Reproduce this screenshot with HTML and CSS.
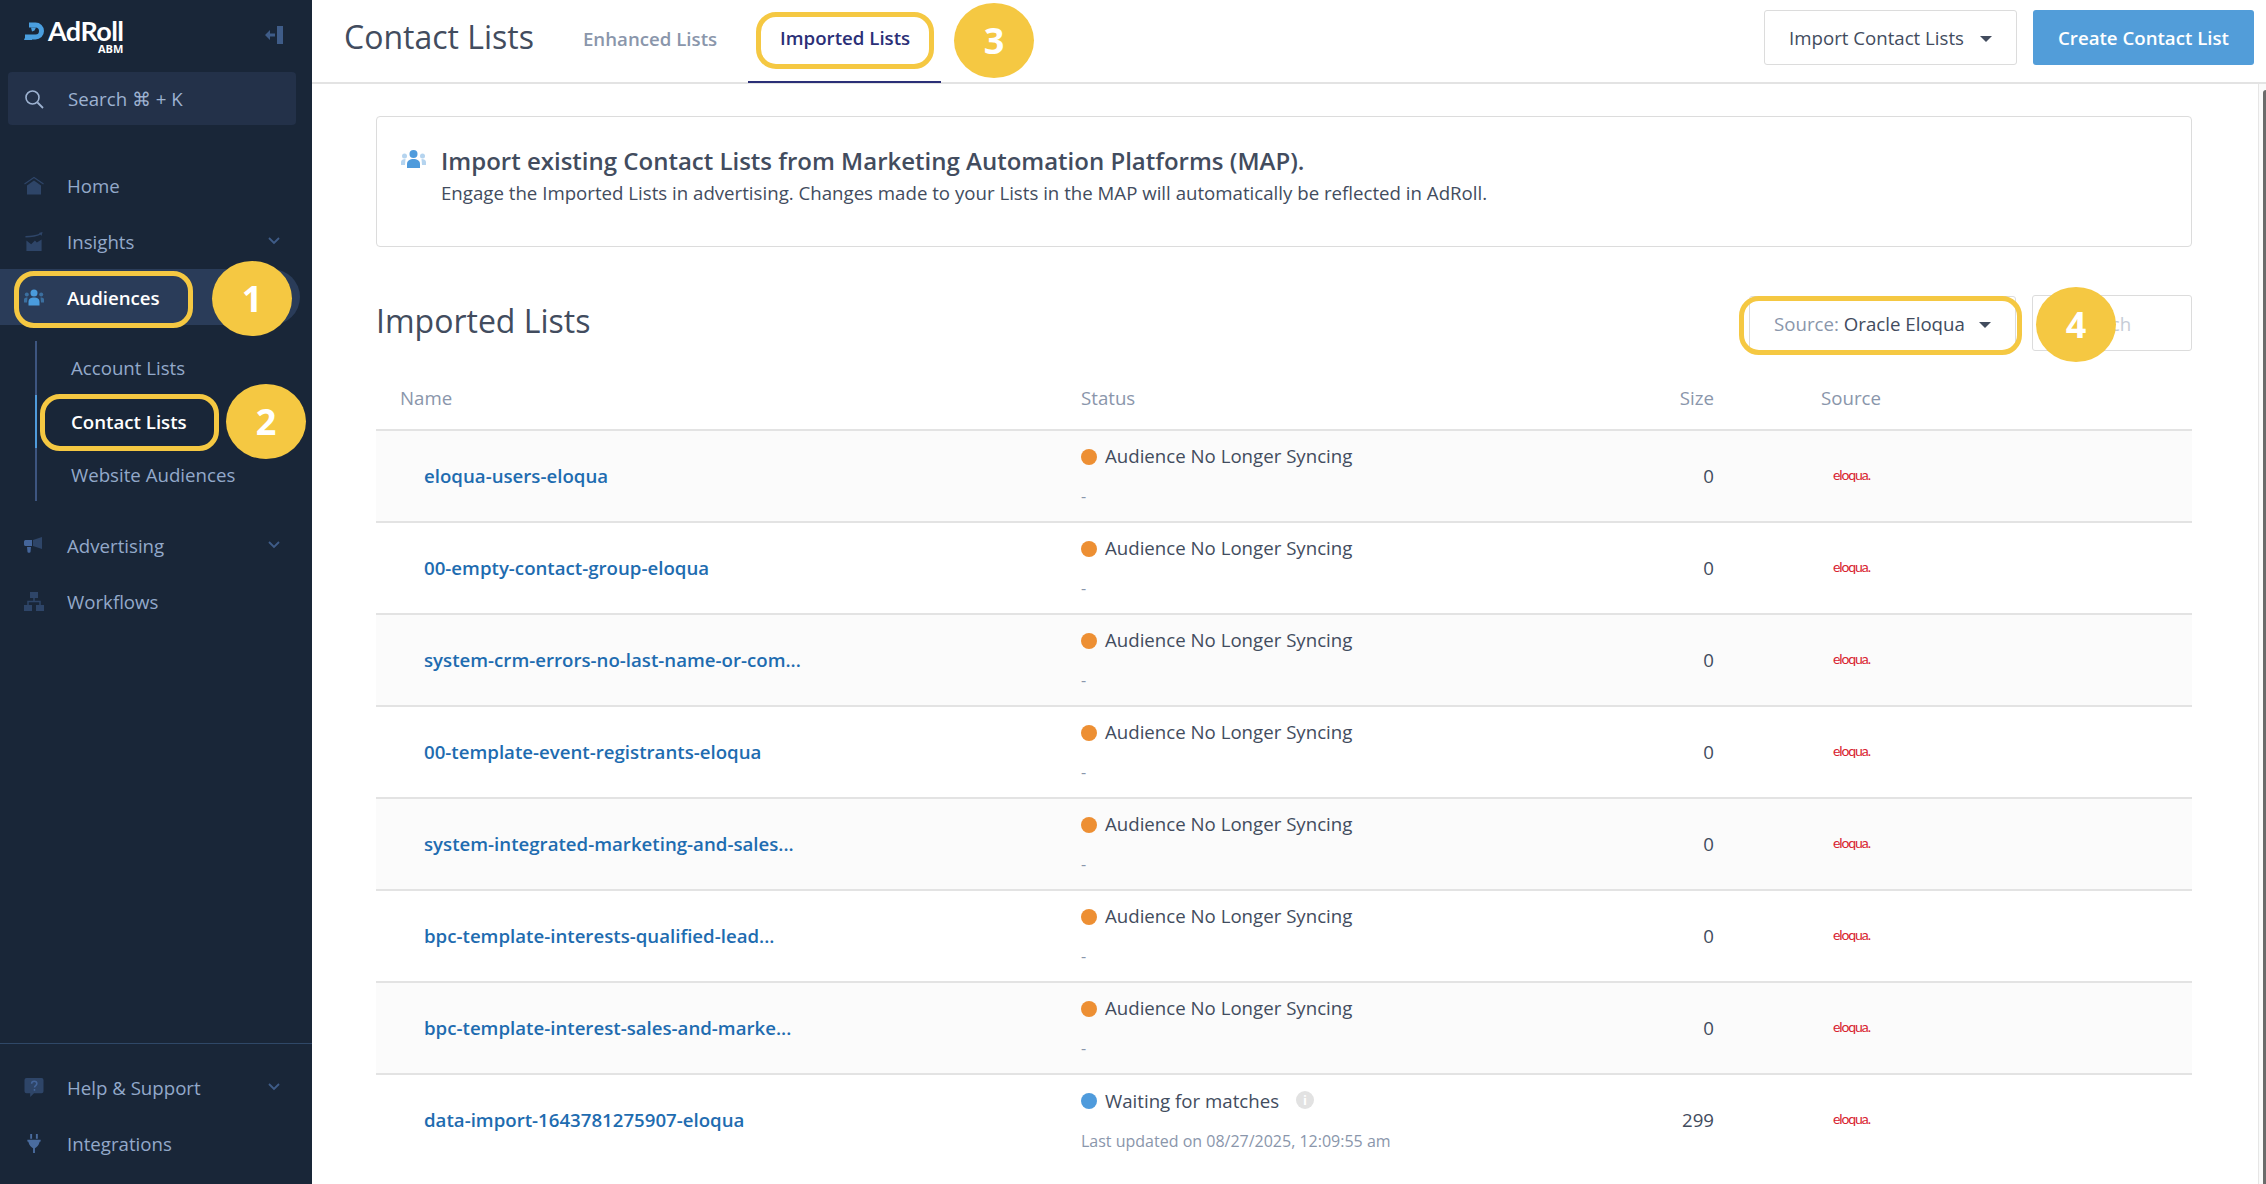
FILE: index.html
```html
<!DOCTYPE html>
<html lang="en">

<head>
    <meta charset="UTF-8" />
    <title>Contact Lists - AdRoll ABM</title>
    <link rel="stylesheet" href="styles.css">
</head>

<body>
    <aside class="sidebar">
        <div class="brand">
            <svg class="brand-mark" viewBox="0 0 20 18"><path d="M5 3h6.500a6 6 0 0 1 0 12H1" fill="none" stroke="#4a9fe0" stroke-width="5"/><path d="M0 18l2-5h6v5z" fill="#4a9fe0"/><path d="M7 5.500h5l-1.500 3-2.500 1z" fill="#4a9fe0"/></svg>
            <div class="brand-name">AdRoll<span>ABM</span></div>
            <svg class="collapse" viewBox="0 0 20 18"><path d="M13 0h6v18h-6z" fill="#3f5c88"/><path d="M1 9l5-5v3.500h5v3H6V14z" fill="#3f5c88"/></svg>
        </div>
        <div class="side-search">
            <svg viewBox="0 0 20 20"><circle cx="8.500" cy="8.500" r="6.500" fill="none" stroke="#9db2d1" stroke-width="1.600"/><path d="M13.500 13.500l5.500 5.500" stroke="#9db2d1" stroke-width="1.800"/></svg>
            <span>Search ⌘ + K</span>
        </div>
        <nav class="nav">
            <a class="nav-item">
                <svg viewBox="0 0 20 18"><path d="M.5 7.500L10 1l9.500 6.500" fill="none" stroke="#2e4568" stroke-width="1.200"/><path d="M3 9l7-5 7 5v9H3z" fill="#2e4568"/></svg>
                Home
            </a>
            <a class="nav-item">
                <svg viewBox="0 0 20 20"><path d="M1 5c6 0 12-1 16-3" fill="none" stroke="#2e4568" stroke-width="1.500"/><path d="M19 0l-1 4-3-3z" fill="#2e4568"/><path d="M2 20V9l5 4 4-4 2 2 5-3v12z" fill="#2e4568"/></svg>
                Insights
                <svg class="chev" viewBox="0 0 12 8"><path d="M1 1l5 5 5-5" fill="none" stroke="#3f5c88" stroke-width="1.800"/></svg>
            </a>
            <a class="nav-item active">
                <svg viewBox="0 0 20 16"><circle cx="10" cy="3.500" r="3.500" fill="#4a9bdc"/><path d="M4.500 16v-3.500C4.500 9 7 8 10 8s5.500 1 5.500 4.500V16z" fill="#4a9bdc"/><circle cx="2.800" cy="5" r="2" fill="#3b6f9f"/><circle cx="17.200" cy="5" r="2" fill="#3b6f9f"/><path d="M0 13v-3c0-1.500 1.500-2 3.500-2L3 13zM20 13v-3c0-1.500-1.500-2-3.500-2l.5 5z" fill="#3b6f9f"/></svg>
                Audiences
            </a>
            <div class="subnav">
                <a class="sub-item">Account Lists</a>
                <a class="sub-item current">Contact Lists</a>
                <a class="sub-item">Website Audiences</a>
            </div>
            <a class="nav-item">
                <svg viewBox="0 0 20 17"><path d="M0 4.500C0 3.500 1 3 2 3h6v6H2C1 9 0 8.500 0 7.500z" fill="#44659a"/><path d="M9 3l9-3v12L9 9z" fill="#2e4568"/><path d="M3 10h4l-.5 5c0 1-3 1-3 0z" fill="#44659a"/></svg>
                Advertising
                <svg class="chev" viewBox="0 0 12 8"><path d="M1 1l5 5 5-5" fill="none" stroke="#3f5c88" stroke-width="1.800"/></svg>
            </a>
            <a class="nav-item">
                <svg viewBox="0 0 20 19"><path d="M6 0h8v6H6zM0 13h8v6H0zM12 13h8v6h-8z" fill="#2e4568"/><path d="M10 6v3.500M4 13V9.500h12V13" fill="none" stroke="#2e4568" stroke-width="1.500"/></svg>
                Workflows
            </a>
        </nav>
        <div class="nav-bottom">
            <a class="nav-item">
                <svg viewBox="0 0 20 20"><path d="M2 0h16a2 2 0 0 1 2 2v12a2 2 0 0 1-2 2H10l-4 4v-4H2a2 2 0 0 1-2-2V2a2 2 0 0 1 2-2z" fill="#2e4568"/><path d="M7.500 6c0-3.500 5.500-3.500 5.500 0 0 2-2.500 2-2.500 4M10.500 11.500v2" fill="none" stroke="#44659a" stroke-width="1.600"/></svg>
                Help &amp; Support
                <svg class="chev" viewBox="0 0 12 8"><path d="M1 1l5 5 5-5" fill="none" stroke="#3f5c88" stroke-width="1.800"/></svg>
            </a>
            <a class="nav-item">
                <svg viewBox="0 0 20 20"><path d="M6 0h2v5H6zM12 0h2v5h-2zM3 6h14v2l-1 .2C15 12 13 14 11 15v5H9v-5c-2-1-4-3-5-6.800L3 8z" fill="#4a6c9e"/></svg>
                Integrations
            </a>
        </div>
    </aside>

    <main class="main">
        <header class="topbar">
            <h1>Contact Lists</h1>
            <div class="tabs">
                <a class="tab">Enhanced Lists</a>
                <a class="tab selected">Imported Lists</a>
            </div>
            <div class="top-actions">
                <button class="btn">Import Contact Lists <i class="caret"></i></button>
                <button class="btn primary">Create Contact List</button>
            </div>
        </header>

        <div class="content">
            <section class="notice">
                <svg viewBox="0 0 25 18"><circle cx="12.500" cy="4" r="4" fill="#4f9bdc"/><path d="M6 18v-4c0-3.500 3-5 6.500-5s6.500 1.500 6.500 5v4z" fill="#4f9bdc"/><circle cx="3.500" cy="6" r="2.500" fill="#b5d4ef"/><circle cx="21.500" cy="6" r="2.500" fill="#b5d4ef"/><path d="M0 15v-3c0-2 2-3 4.500-3L4 15zM25 15v-3c0-2-2-3-4.500-3l.5 6z" fill="#b5d4ef"/></svg>
                <div>
                    <h2>Import existing Contact Lists from Marketing Automation Platforms (MAP).</h2>
                    <p>Engage the Imported Lists in advertising. Changes made to your Lists in the MAP will automatically be reflected in AdRoll.</p>
                </div>
            </section>

            <div class="toolbar">
                <h3>Imported Lists</h3>
                <button class="btn source"><span class="muted">Source:</span> Oracle Eloqua <i class="caret"></i></button>
                <div class="search-box">Search</div>
            </div>

            <table class="lists">
                <colgroup>
                    <col class="col-name">
                    <col class="col-status">
                    <col class="col-size">
                    <col class="col-source">
                </colgroup>
                <thead>
                    <tr>
                        <th>Name</th>
                        <th>Status</th>
                        <th class="num">Size</th>
                        <th class="src">Source</th>
                    </tr>
                </thead>
                <tbody>
                    <tr>
                        <td class="name"><a>eloqua-users-eloqua</a></td>
                        <td><div class="status"><i class="dot"></i>Audience No Longer Syncing</div><div class="updated">-</div></td>
                        <td class="num">0</td>
                        <td class="src"><span class="eloqua">eloqua.</span></td>
                    </tr>
                    <tr>
                        <td class="name"><a>00-empty-contact-group-eloqua</a></td>
                        <td><div class="status"><i class="dot"></i>Audience No Longer Syncing</div><div class="updated">-</div></td>
                        <td class="num">0</td>
                        <td class="src"><span class="eloqua">eloqua.</span></td>
                    </tr>
                    <tr>
                        <td class="name"><a>system-crm-errors-no-last-name-or-com...</a></td>
                        <td><div class="status"><i class="dot"></i>Audience No Longer Syncing</div><div class="updated">-</div></td>
                        <td class="num">0</td>
                        <td class="src"><span class="eloqua">eloqua.</span></td>
                    </tr>
                    <tr>
                        <td class="name"><a>00-template-event-registrants-eloqua</a></td>
                        <td><div class="status"><i class="dot"></i>Audience No Longer Syncing</div><div class="updated">-</div></td>
                        <td class="num">0</td>
                        <td class="src"><span class="eloqua">eloqua.</span></td>
                    </tr>
                    <tr>
                        <td class="name"><a>system-integrated-marketing-and-sales...</a></td>
                        <td><div class="status"><i class="dot"></i>Audience No Longer Syncing</div><div class="updated">-</div></td>
                        <td class="num">0</td>
                        <td class="src"><span class="eloqua">eloqua.</span></td>
                    </tr>
                    <tr>
                        <td class="name"><a>bpc-template-interests-qualified-lead...</a></td>
                        <td><div class="status"><i class="dot"></i>Audience No Longer Syncing</div><div class="updated">-</div></td>
                        <td class="num">0</td>
                        <td class="src"><span class="eloqua">eloqua.</span></td>
                    </tr>
                    <tr>
                        <td class="name"><a>bpc-template-interest-sales-and-marke...</a></td>
                        <td><div class="status"><i class="dot"></i>Audience No Longer Syncing</div><div class="updated">-</div></td>
                        <td class="num">0</td>
                        <td class="src"><span class="eloqua">eloqua.</span></td>
                    </tr>
                    <tr>
                        <td class="name"><a>data-import-1643781275907-eloqua</a></td>
                        <td><div class="status"><i class="dot blue"></i>Waiting for matches<i class="info">i</i></div><div class="updated">Last updated on 08/27/2025, 12:09:55 am</div></td>
                        <td class="num">299</td>
                        <td class="src"><span class="eloqua">eloqua.</span></td>
                    </tr>
                </tbody>
            </table>
        </div>
        <div class="scrollbar"></div>
    </main>

    <!-- callouts drawn on top of the screenshot -->
    <div class="ring ring-1"></div>
    <div class="ring ring-2"></div>
    <div class="ring ring-3"></div>
    <div class="ring ring-4"></div>
    <div class="badge badge-1">1</div>
    <div class="badge badge-2">2</div>
    <div class="badge badge-3">3</div>
    <div class="badge badge-4">4</div>
</body>

</html>
```

FILE: styles.css
```css
* {
    box-sizing: border-box;
}

html,
body {
    height: 100%;
}

body {
    margin: 0;
    display: flex;
    overflow: hidden;
    font-family: "Open Sans", "Liberation Sans", sans-serif;
    font-size: 18.67px;
    color: #424c5e;
    background: white;
}

/* sidebar */

.sidebar {
    width: 312px;
    flex: none;
    display: flex;
    flex-direction: column;
    background: #192638;
}

.brand {
    height: 72px;
    display: flex;
    align-items: flex-start;
    padding: 20px 28px 0 24px;
}

.brand-mark {
    width: 20px;
    height: 18px;
    margin-top: 2px;
}

.brand-name {
    margin-left: 4px;
    font-family: "Lato", sans-serif;
    font-weight: 700;
    font-size: 27px;
    line-height: 22px;
    letter-spacing: -0.6px;
    color: white;
}

.brand-name span {
    display: block;
    font-family: "Open Sans", sans-serif;
    font-size: 11px;
    line-height: 11px;
    letter-spacing: 0;
    text-align: right;
    margin-top: 1px;
}

.collapse {
    width: 20px;
    height: 18px;
    margin: 6px 0 0 auto;
}

.side-search {
    height: 53px;
    margin: 0 16px 0 8px;
    padding-left: 16px;
    display: flex;
    align-items: center;
    gap: 24px;
    background: #233149;
    border-radius: 4px;
    color: #9db2d1;
}

.side-search svg {
    width: 20px;
    height: 20px;
}

.nav {
    margin-top: 32px;
    flex: 1;
}

.nav-item {
    height: 56px;
    display: flex;
    align-items: center;
    padding-left: 24px;
    color: #93a9ca;
}

.nav-item svg {
    width: 20px;
    height: 19px;
    flex: none;
    margin-right: 23px;
}

.nav-item .chev {
    width: 12px;
    height: 8px;
    margin: 0 32px 0 auto;
}

.nav-item.active {
    margin-right: 12px;
    background: #2a3c59;
    border-radius: 0 28px 28px 0;
    color: white;
    font-weight: 600;
}

.subnav {
    margin: 16px 0 16px 35px;
    padding-left: 34px;
    border-left: 2px solid #3d5580;
    height: 160px;
}

.sub-item {
    display: block;
    height: 53.500px;
    line-height: 53.500px;
    color: #93a9ca;
}

.sub-item.current {
    margin-left: -36px;
    padding-left: 34px;
    border-left: 2px solid #4f9bdc;
    color: white;
    font-weight: 600;
}

.nav-bottom {
    border-top: 1px solid #2f4868;
    padding: 15px 0 13px;
}

/* main */

.main {
    position: relative;
    flex: 1;
    min-width: 0;
}

.topbar {
    height: 84px;
    display: flex;
    align-items: flex-start;
    padding: 0 12px 0 32px;
    border-bottom: 2px solid #e3e3e3;
}

h1 {
    margin: 15px 40px 0 0;
    font-size: 32px;
    line-height: 44px;
    font-weight: 400;
}

.tabs {
    display: flex;
    align-self: stretch;
}

.tab {
    display: flex;
    align-items: center;
    height: 83px;
    padding: 0 31px 7px 9px;
    color: #8a96ab;
    font-weight: 600;
}

.tab.selected {
    padding: 0 31px 7px 32px;
    border-bottom: 2px solid #2b2f77;
    color: #2b2f77;
}

.top-actions {
    display: flex;
    gap: 16px;
    margin: 10px 0 0 auto;
}

.btn {
    height: 55px;
    padding: 0 24px;
    display: flex;
    align-items: center;
    background: white;
    border: 1px solid #dcdcdc;
    border-radius: 3px;
    font: inherit;
    color: #424c5e;
}

.btn.primary {
    width: 221px;
    justify-content: center;
    padding: 0;
    border: 0;
    background: #529dd9;
    color: white;
    font-weight: 600;
}

.caret {
    width: 0;
    height: 0;
    margin: 3px 0 0 16px;
    border-left: 6px solid transparent;
    border-right: 6px solid transparent;
    border-top: 6px solid #424c5e;
}

.content {
    width: 1940px;
    padding: 32px 60px 0 64px;
}

.notice {
    height: 131px;
    display: flex;
    gap: 15px;
    padding: 27px 24px 0;
    border: 1px solid #dcdcdc;
    border-radius: 4px;
}

.notice svg {
    width: 25px;
    height: 18px;
    flex: none;
    margin-top: 6px;
}

h2 {
    margin: 0;
    font-size: 24px;
    line-height: 33px;
    font-weight: 600;
}

.notice p {
    margin: 0;
    line-height: 32px;
}

.toolbar {
    height: 56px;
    margin-top: 48px;
    display: flex;
    align-items: center;
}

h3 {
    margin: 0 auto 0 0;
    font-size: 32px;
    font-weight: 400;
    position: relative;
    top: -3px;
}

.btn.source {
    width: 267px;
    height: 55px;
    padding: 0 24px;
}

.muted {
    color: #8a96ab;
    margin-right: 5px;
}

.btn.source .caret {
    margin-left: auto;
}

.search-box {
    width: 160px;
    height: 56px;
    margin-left: 16px;
    padding-left: 39px;
    line-height: 55px;
    border: 1px solid #dcdcdc;
    border-radius: 3px;
    color: #c6ccd6;
}

.lists {
    width: 100%;
    margin-top: 19px;
    border-collapse: collapse;
    table-layout: fixed;
}

.col-name {
    width: 681px;
}

.col-status {
    width: 400px;
}

.col-size {
    width: 281px;
}

th {
    height: 60px;
    padding: 0 24px 4px;
    text-align: left;
    font-weight: 400;
    color: #8a96ab;
    border-bottom: 2px solid #e3e3e3;
}

td {
    height: 92px;
    padding: 0 24px 2px;
    border-bottom: 2px solid #e3e3e3;
}

tbody tr:nth-child(odd) {
    background: #fbfbfb;
}

tbody tr:last-child td {
    border-bottom: 0;
}

.num {
    text-align: right;
}

th.src,
td.src {
    padding-left: 83px;
}

.name {
    padding-left: 48px;
}

.name a {
    color: #1e6cb0;
    font-weight: 600;
}

.status {
    display: flex;
    align-items: center;
}

.dot {
    width: 16px;
    height: 16px;
    margin: 2px 8px 0 0;
    border-radius: 50%;
    background: #ed8f33;
}

.dot.blue {
    background: #4f9bdc;
}

.info {
    width: 18px;
    height: 18px;
    margin-left: 17px;
    border-radius: 50%;
    background: #e2e2e2;
    color: white;
    font: 700 13px/18px "Open Sans", sans-serif;
    text-align: center;
}

.updated {
    margin-top: 17px;
    font-size: 16px;
    line-height: 22px;
    color: #8a96ab;
}

.eloqua {
    display: inline-block;
    margin-left: 12px;
    position: relative;
    top: -3px;
    font-family: "Lato", sans-serif;
    font-size: 14px;
    letter-spacing: -1.100px;
    color: #d8232f;
}

.scrollbar {
    position: absolute;
    top: 84px;
    right: 0;
    bottom: 0;
    width: 8px;
    border-left: 1px solid #e6e6e6;
    background: #fafafa;
}

.scrollbar::after {
    content: "";
    position: absolute;
    top: 6px;
    right: 0;
    bottom: 0;
    width: 3px;
    border-radius: 3px 0 0 0;
    background: #6b6b6b;
}

/* callouts */

.ring {
    position: absolute;
    border: 5px solid #f5c842;
    border-radius: 20px;
}

.ring-1 {
    left: 14px;
    top: 271px;
    width: 179px;
    height: 57px;
}

.ring-2 {
    left: 40px;
    top: 394px;
    width: 179px;
    height: 57px;
}

.ring-3 {
    left: 756px;
    top: 12px;
    width: 178px;
    height: 57px;
}

.ring-4 {
    left: 1739px;
    top: 296px;
    width: 283px;
    height: 59px;
}

.badge {
    position: absolute;
    width: 80px;
    height: 75px;
    border-radius: 50%;
    background: #f5c842;
    color: white;
    font-size: 36px;
    font-weight: 700;
    line-height: 75px;
    text-align: center;
}

.badge-1 {
    left: 212px;
    top: 261px;
}

.badge-2 {
    left: 226px;
    top: 384px;
}

.badge-3 {
    left: 954px;
    top: 3px;
}

.badge-4 {
    left: 2036px;
    top: 287px;
}
```
